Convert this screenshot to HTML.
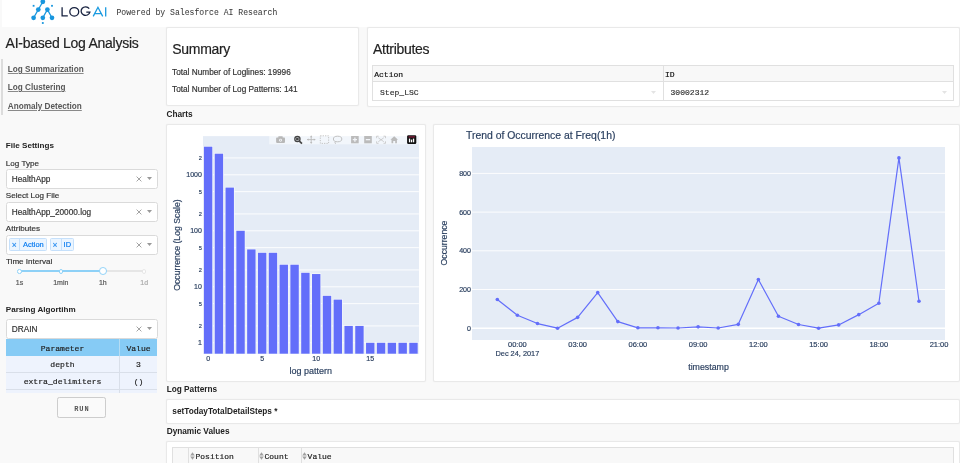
<!DOCTYPE html>
<html><head><meta charset="utf-8"><style>
html,body{margin:0;padding:0;width:960px;height:463px;overflow:hidden;background:#f9f9f9}
body{position:relative;font-family:'Liberation Sans', sans-serif}
.t{position:absolute;white-space:pre}
.r{-webkit-text-stroke:0.18px currentColor}
</style></head><body><div id="root" style="position:absolute;left:0;top:0;width:960px;height:463px;will-change:transform">
<div style="position:absolute;left:1.6px;top:0px;width:958.4px;height:26.8px;background:#fff"></div>
<svg style="position:absolute;left:0;top:0" width="120" height="27" viewBox="0 0 120 27">
<g stroke="#1796de" stroke-width="1.25" fill="none">
<line x1="42.8" y1="1.8" x2="38.3" y2="9.6"/><line x1="38.3" y1="9.6" x2="33.6" y2="17.8"/>
<line x1="47.4" y1="9.6" x2="42.8" y2="17.8"/><line x1="47.4" y1="9.6" x2="52" y2="17.8"/>
</g>
<g fill="#1796de">
<circle cx="42.8" cy="1.8" r="2.4"/><circle cx="38.3" cy="9.6" r="2.35"/><circle cx="47.4" cy="9.6" r="2.35"/>
<circle cx="33.6" cy="17.8" r="2.35"/><circle cx="42.8" cy="17.8" r="2.35"/><circle cx="52" cy="17.8" r="2.35"/>
<rect x="32.7" y="4.9" width="1.8" height="1.8"/><rect x="51.1" y="4.9" width="1.8" height="1.8"/><rect x="41.9" y="22.1" width="1.8" height="1.8"/>
</g></svg>
<svg style="position:absolute;left:0;top:0" width="120" height="27" viewBox="0 0 120 27">
<g fill="none" stroke="#16213f" stroke-width="1.3">
<path d="M62.1 7.2V15.8H67.8"/>
<ellipse cx="74.25" cy="11.85" rx="4.45" ry="4.3"/>
<path d="M89.2 8.6A4.45 4.3 0 1 0 89.9 12.1H86.3"/>
</g>
<g fill="none" stroke="#1a9ae0" stroke-width="1.3">
<path d="M93.2 16.4L97.95 7.3L102.7 16.4M94.7 13.6H101.2"/>
<path d="M105.7 7.2V16.4"/>
</g></svg>
<div class="t r" style="left:116.40px;top:9px;font:400 8.14px/8.14px 'Liberation Mono', monospace;color:#3a3a3a;-webkit-text-stroke:0.05px currentColor">Powered by Salesforce AI Research</div>
<div class="t r" style="left:5.60px;top:36px;font:400 14.0px/14.0px 'Liberation Sans', sans-serif;color:#222;letter-spacing:-0.27px;">AI-based Log Analysis</div>
<div style="position:absolute;left:1.3px;top:59px;width:1.6px;height:55.7px;background:#dcdcdc"></div>
<div class="t" style="left:7.80px;top:66px;font:700 8.19px/8.19px 'Liberation Sans', sans-serif;color:#585858;text-decoration:underline;text-decoration-color:#8a8a8a;text-decoration-thickness:0.8px;text-underline-offset:1px">Log Summarization</div>
<div class="t" style="left:7.80px;top:84px;font:700 8.19px/8.19px 'Liberation Sans', sans-serif;color:#585858;text-decoration:underline;text-decoration-color:#8a8a8a;text-decoration-thickness:0.8px;text-underline-offset:1px">Log Clustering</div>
<div class="t" style="left:7.80px;top:103px;font:700 8.19px/8.19px 'Liberation Sans', sans-serif;color:#585858;text-decoration:underline;text-decoration-color:#8a8a8a;text-decoration-thickness:0.8px;text-underline-offset:1px">Anomaly Detection</div>
<div class="t" style="left:5.80px;top:142px;font:700 8.1px/8.1px 'Liberation Sans', sans-serif;color:#222;">File Settings</div>
<div class="t r" style="left:5.80px;top:160px;font:400 8.1px/8.1px 'Liberation Sans', sans-serif;color:#333;">Log Type</div>
<div style="position:absolute;left:5.5px;top:168.8px;width:152.2px;height:20.19999999999999px;box-sizing:border-box;background:#fff;border:1px solid #dadada;border-radius:2.5px"></div>
<div class="t r" style="left:11.80px;top:176px;font:400 8.25px/8.25px 'Liberation Sans', sans-serif;color:#333;">HealthApp</div>
<svg style="position:absolute;left:136px;top:175.90px" width="6" height="6" viewBox="0 0 6 6"><path d="M0.6 0.6L5.4 5.4M5.4 0.6L0.6 5.4" stroke="#999" stroke-width="0.9"/></svg>
<svg style="position:absolute;left:146.5px;top:177.30px" width="5" height="3" viewBox="0 0 5 3"><path d="M0 0H5L2.5 3Z" fill="#999"/></svg>
<div class="t r" style="left:5.80px;top:192px;font:400 8.1px/8.1px 'Liberation Sans', sans-serif;color:#333;">Select Log File</div>
<div style="position:absolute;left:5.5px;top:202.0px;width:152.2px;height:20.0px;box-sizing:border-box;background:#fff;border:1px solid #dadada;border-radius:2.5px"></div>
<div class="t r" style="left:11.80px;top:209px;font:400 8.25px/8.25px 'Liberation Sans', sans-serif;color:#333;">HealthApp_20000.log</div>
<svg style="position:absolute;left:136px;top:209.00px" width="6" height="6" viewBox="0 0 6 6"><path d="M0.6 0.6L5.4 5.4M5.4 0.6L0.6 5.4" stroke="#999" stroke-width="0.9"/></svg>
<svg style="position:absolute;left:146.5px;top:210.40px" width="5" height="3" viewBox="0 0 5 3"><path d="M0 0H5L2.5 3Z" fill="#999"/></svg>
<div class="t r" style="left:5.80px;top:225px;font:400 8.1px/8.1px 'Liberation Sans', sans-serif;color:#333;">Attributes</div>
<div style="position:absolute;left:5.5px;top:234.6px;width:152.2px;height:20.30000000000001px;box-sizing:border-box;background:#fff;border:1px solid #dadada;border-radius:2.5px"></div>
<svg style="position:absolute;left:136px;top:241.75px" width="6" height="6" viewBox="0 0 6 6"><path d="M0.6 0.6L5.4 5.4M5.4 0.6L0.6 5.4" stroke="#999" stroke-width="0.9"/></svg>
<svg style="position:absolute;left:146.5px;top:243.15px" width="5" height="3" viewBox="0 0 5 3"><path d="M0 0H5L2.5 3Z" fill="#999"/></svg>
<div style="position:absolute;left:9.4px;top:238.1px;width:37.5px;height:13.3px;box-sizing:border-box;background:#ebf5ff;border:0.8px solid #c5e0fb;border-radius:1.5px"></div>
<div style="position:absolute;left:19.4px;top:238.1px;width:0.8px;height:13.3px;background:#c5e0fb"></div>
<div class="t r" style="left:14.20px;transform:translateX(-50%);top:241px;font:400 8.5px/8.5px 'Liberation Sans', sans-serif;color:#2a8ef0;">×</div>
<div class="t r" style="left:23.00px;top:241px;font:400 7.45px/7.45px 'Liberation Sans', sans-serif;color:#0a7cf0;">Action</div>
<div style="position:absolute;left:49.7px;top:238.1px;width:23.9px;height:13.3px;box-sizing:border-box;background:#ebf5ff;border:0.8px solid #c5e0fb;border-radius:1.5px"></div>
<div style="position:absolute;left:60.7px;top:238.1px;width:0.8px;height:13.3px;background:#c5e0fb"></div>
<div class="t r" style="left:55.00px;transform:translateX(-50%);top:241px;font:400 8.5px/8.5px 'Liberation Sans', sans-serif;color:#2a8ef0;">×</div>
<div class="t r" style="left:63.60px;top:241px;font:400 7.45px/7.45px 'Liberation Sans', sans-serif;color:#0a7cf0;">ID</div>
<div class="t r" style="left:6.00px;top:258px;font:400 8.05px/8.05px 'Liberation Sans', sans-serif;color:#333;">Time Interval</div>
<div style="position:absolute;left:19.5px;top:270.3px;width:83.3px;height:2.0px;background:#8ed1f7"></div>
<div style="position:absolute;left:102.8px;top:270.3px;width:41.4px;height:2.0px;background:#e6e6e6"></div>
<div style="position:absolute;left:17.2px;top:269.0px;width:4.6px;height:4.6px;box-sizing:border-box;background:#fff;border:1.1px solid #8ed1f7;border-radius:50%"></div>
<div style="position:absolute;left:58.5px;top:269.0px;width:4.6px;height:4.6px;box-sizing:border-box;background:#fff;border:1.1px solid #8ed1f7;border-radius:50%"></div>
<div style="position:absolute;left:141.89999999999998px;top:269.0px;width:4.6px;height:4.6px;box-sizing:border-box;background:#fff;border:1.1px solid #e6e6e6;border-radius:50%"></div>
<div style="position:absolute;left:98.89999999999999px;top:267.40000000000003px;width:7.8px;height:7.8px;box-sizing:border-box;background:#fff;border:1.6px solid #8ed1f7;border-radius:50%"></div>
<div class="t r" style="left:19.50px;transform:translateX(-50%);top:279px;font:400 7.0px/7.0px 'Liberation Sans', sans-serif;color:#555;">1s</div>
<div class="t r" style="left:60.80px;transform:translateX(-50%);top:279px;font:400 7.0px/7.0px 'Liberation Sans', sans-serif;color:#555;">1min</div>
<div class="t r" style="left:102.80px;transform:translateX(-50%);top:279px;font:400 7.0px/7.0px 'Liberation Sans', sans-serif;color:#555;">1h</div>
<div class="t r" style="left:144.20px;transform:translateX(-50%);top:279px;font:400 7.0px/7.0px 'Liberation Sans', sans-serif;color:#aaa;">1d</div>
<div class="t" style="left:5.80px;top:306px;font:700 8.1px/8.1px 'Liberation Sans', sans-serif;color:#222;">Parsing Algortihm</div>
<div style="position:absolute;left:5.5px;top:319.1px;width:152.2px;height:19.5px;box-sizing:border-box;background:#fff;border:1px solid #dadada;border-radius:2.5px"></div>
<div class="t r" style="left:11.80px;top:326px;font:400 8.25px/8.25px 'Liberation Sans', sans-serif;color:#333;">DRAIN</div>
<svg style="position:absolute;left:136px;top:325.85px" width="6" height="6" viewBox="0 0 6 6"><path d="M0.6 0.6L5.4 5.4M5.4 0.6L0.6 5.4" stroke="#999" stroke-width="0.9"/></svg>
<svg style="position:absolute;left:146.5px;top:327.25px" width="5" height="3" viewBox="0 0 5 3"><path d="M0 0H5L2.5 3Z" fill="#999"/></svg>
<div style="position:absolute;left:6px;top:338.6px;width:151.3px;height:17.3px;background:#86cbf5"></div>
<div style="position:absolute;left:119.3px;top:338.6px;width:0.8px;height:17.3px;background:#b5dcf3"></div>
<div class="t r" style="left:62.50px;transform:translateX(-50%);top:345px;font:400 8.05px/8.05px 'Liberation Mono', monospace;color:#222;">Parameter</div>
<div class="t r" style="left:138.50px;transform:translateX(-50%);top:345px;font:400 8.05px/8.05px 'Liberation Mono', monospace;color:#222;">Value</div>
<div style="position:absolute;left:6px;top:355.9px;width:151.3px;height:37.6px;background:#eef3fd"></div>
<div style="position:absolute;left:6px;top:371.8px;width:151.3px;height:0.9px;background:#d9dfe9"></div>
<div style="position:absolute;left:6px;top:388.5px;width:151.3px;height:0.9px;background:#d9dfe9"></div>
<div style="position:absolute;left:119.3px;top:355.9px;width:0.9px;height:37.6px;background:#d9dfe9"></div>
<div class="t r" style="left:62.50px;transform:translateX(-50%);top:361px;font:400 8.1px/8.1px 'Liberation Mono', monospace;color:#222;">depth</div>
<div class="t r" style="left:138.50px;transform:translateX(-50%);top:361px;font:400 8.1px/8.1px 'Liberation Mono', monospace;color:#222;">3</div>
<div class="t r" style="left:62.50px;transform:translateX(-50%);top:378px;font:400 8.1px/8.1px 'Liberation Mono', monospace;color:#222;">extra_delimiters</div>
<div class="t r" style="left:138.50px;transform:translateX(-50%);top:378px;font:400 8.1px/8.1px 'Liberation Mono', monospace;color:#222;">()</div>
<div style="position:absolute;left:57.0px;top:396.8px;width:49.4px;height:21.5px;box-sizing:border-box;background:#fafafa;border:1px solid #cdcdcd;border-radius:2.5px;box-shadow:0 0 0.6px rgba(0,0,0,0.12)"></div>
<div class="t" style="left:81.90px;transform:translateX(-50%);top:406px;font:700 7.0px/7.0px 'Liberation Mono', monospace;color:#555;letter-spacing:0.9px;">RUN</div>
<div style="position:absolute;left:166.1px;top:27.0px;width:192.7px;height:79.0px;box-sizing:border-box;background:#fff;border:1px solid #e9e9e9;border-radius:2px;box-shadow:0 0 1px rgba(0,0,0,0.10)"></div>
<div class="t r" style="left:172.30px;top:42px;font:400 14.0px/14.0px 'Liberation Sans', sans-serif;color:#222;letter-spacing:-0.31px;">Summary</div>
<div class="t r" style="left:172.00px;top:69px;font:400 8.25px/8.25px 'Liberation Sans', sans-serif;color:#333;">Total Number of Loglines: 19996</div>
<div class="t r" style="left:172.00px;top:86px;font:400 8.25px/8.25px 'Liberation Sans', sans-serif;color:#333;">Total Number of Log Patterns: 141</div>
<div style="position:absolute;left:366.7px;top:27.4px;width:593.5px;height:79.9px;box-sizing:border-box;background:#fff;border:1px solid #e9e9e9;border-radius:2px;box-shadow:0 0 1px rgba(0,0,0,0.10)"></div>
<div class="t r" style="left:373.00px;top:42px;font:400 14.0px/14.0px 'Liberation Sans', sans-serif;color:#222;letter-spacing:-0.28px;">Attributes</div>
<div style="position:absolute;left:372.2px;top:65.4px;width:581.6px;height:35.2px;box-sizing:border-box;border:1px solid #e0e0e0;background:#fff"></div>
<div style="position:absolute;left:373.2px;top:66.4px;width:579.6px;height:15.0px;background:#f8f8f8"></div>
<div style="position:absolute;left:372.2px;top:81.2px;width:581.6px;height:0.9px;background:#e0e0e0"></div>
<div style="position:absolute;left:663.0px;top:65.4px;width:0.9px;height:35.2px;background:#e0e0e0"></div>
<div class="t r" style="left:374.20px;top:71px;font:400 8.05px/8.05px 'Liberation Mono', monospace;color:#111;">Action</div>
<div class="t r" style="left:665.00px;top:71px;font:400 8.05px/8.05px 'Liberation Mono', monospace;color:#111;">ID</div>
<div class="t r" style="left:380.00px;top:89px;font:400 8.05px/8.05px 'Liberation Mono', monospace;color:#333;">Step_LSC</div>
<div class="t r" style="left:670.50px;top:89px;font:400 8.05px/8.05px 'Liberation Mono', monospace;color:#333;">30002312</div>
<svg style="position:absolute;left:651.20px;top:90.8px" width="5" height="3" viewBox="0 0 5 3"><path d="M0 0H5L2.5 3Z" fill="#e4e4e4"/></svg>
<svg style="position:absolute;left:941.50px;top:90.8px" width="5" height="3" viewBox="0 0 5 3"><path d="M0 0H5L2.5 3Z" fill="#e4e4e4"/></svg>
<div class="t" style="left:166.50px;top:111px;font:700 8.25px/8.25px 'Liberation Sans', sans-serif;color:#222;">Charts</div>
<div style="position:absolute;left:166.3px;top:123.8px;width:259.6px;height:258.2px;box-sizing:border-box;background:#fff;border:1px solid #e9e9e9;border-radius:2px;box-shadow:0 0 1px rgba(0,0,0,0.10)"></div>
<div style="position:absolute;left:433.2px;top:123.8px;width:527.0px;height:258.2px;box-sizing:border-box;background:#fff;border:1px solid #e9e9e9;border-radius:2px;box-shadow:0 0 1px rgba(0,0,0,0.10)"></div>
<div class="t" style="left:166.70px;top:386px;font:700 8.25px/8.25px 'Liberation Sans', sans-serif;color:#222;">Log Patterns</div>
<div style="position:absolute;left:166.3px;top:399.2px;width:793.9px;height:24.7px;box-sizing:border-box;background:#fff;border:1px solid #e9e9e9;border-radius:2px;box-shadow:0 0 1px rgba(0,0,0,0.10)"></div>
<div class="t" style="left:172.30px;top:408px;font:700 8.25px/8.25px 'Liberation Sans', sans-serif;color:#222;">setTodayTotalDetailSteps *</div>
<div class="t" style="left:166.70px;top:428px;font:700 8.25px/8.25px 'Liberation Sans', sans-serif;color:#222;">Dynamic Values</div>
<div style="position:absolute;left:166.3px;top:441.3px;width:793.9px;height:28.7px;box-sizing:border-box;background:#fff;border:1px solid #e9e9e9;border-radius:2px;box-shadow:0 0 1px rgba(0,0,0,0.10)"></div>
<div style="position:absolute;left:172.3px;top:447.2px;width:781.7px;height:30px;box-sizing:border-box;border:1px solid #e0e0e0;background:#f8f8f8"></div>
<div style="position:absolute;left:188.4px;top:447.2px;width:0.9px;height:30px;background:#e0e0e0"></div>
<div style="position:absolute;left:257.6px;top:447.2px;width:0.9px;height:30px;background:#e0e0e0"></div>
<div style="position:absolute;left:300.7px;top:447.2px;width:0.9px;height:30px;background:#e0e0e0"></div>
<svg style="position:absolute;left:190.00px;top:451.6px" width="5" height="8" viewBox="0 0 5 8"><path d="M0.2 3.4L2.5 0.3L4.8 3.4ZM0.2 4.6L2.5 7.7L4.8 4.6Z" fill="#a0a0a0"/></svg>
<div class="t r" style="left:195.50px;top:453px;font:400 8.0px/8.0px 'Liberation Mono', monospace;color:#222;">Position</div>
<svg style="position:absolute;left:259.00px;top:451.6px" width="5" height="8" viewBox="0 0 5 8"><path d="M0.2 3.4L2.5 0.3L4.8 3.4ZM0.2 4.6L2.5 7.7L4.8 4.6Z" fill="#a0a0a0"/></svg>
<div class="t r" style="left:264.50px;top:453px;font:400 8.0px/8.0px 'Liberation Mono', monospace;color:#222;">Count</div>
<svg style="position:absolute;left:302.10px;top:451.6px" width="5" height="8" viewBox="0 0 5 8"><path d="M0.2 3.4L2.5 0.3L4.8 3.4ZM0.2 4.6L2.5 7.7L4.8 4.6Z" fill="#a0a0a0"/></svg>
<div class="t r" style="left:307.60px;top:453px;font:400 8.0px/8.0px 'Liberation Mono', monospace;color:#222;">Value</div>
<div style="position:absolute;left:202.7px;top:135.5px;width:216.2px;height:218.2px;background:#e5ecf6"></div>
<svg style="position:absolute;left:0;top:0" width="960" height="463" viewBox="0 0 960 463"><line x1="202.7" y1="342.80" x2="418.9" y2="342.80" stroke="#fff" stroke-width="0.9"/><line x1="202.7" y1="325.94" x2="418.9" y2="325.94" stroke="#fff" stroke-width="0.9"/><line x1="202.7" y1="303.66" x2="418.9" y2="303.66" stroke="#fff" stroke-width="0.9"/><line x1="202.7" y1="286.80" x2="418.9" y2="286.80" stroke="#fff" stroke-width="0.9"/><line x1="202.7" y1="269.94" x2="418.9" y2="269.94" stroke="#fff" stroke-width="0.9"/><line x1="202.7" y1="247.66" x2="418.9" y2="247.66" stroke="#fff" stroke-width="0.9"/><line x1="202.7" y1="230.80" x2="418.9" y2="230.80" stroke="#fff" stroke-width="0.9"/><line x1="202.7" y1="213.94" x2="418.9" y2="213.94" stroke="#fff" stroke-width="0.9"/><line x1="202.7" y1="191.66" x2="418.9" y2="191.66" stroke="#fff" stroke-width="0.9"/><line x1="202.7" y1="174.80" x2="418.9" y2="174.80" stroke="#fff" stroke-width="0.9"/><line x1="202.7" y1="157.94" x2="418.9" y2="157.94" stroke="#fff" stroke-width="0.9"/><line x1="202.7" y1="135.66" x2="418.9" y2="135.66" stroke="#fff" stroke-width="0.9"/><rect x="203.21" y="145.99" width="9.80" height="207.71" fill="#f4f7fc"/><rect x="203.91" y="146.69" width="8.4" height="207.01" fill="#636efa"/><rect x="214.02" y="153.00" width="9.80" height="200.70" fill="#f4f7fc"/><rect x="214.72" y="153.70" width="8.4" height="200.00" fill="#636efa"/><rect x="224.83" y="186.89" width="9.80" height="166.81" fill="#f4f7fc"/><rect x="225.53" y="187.59" width="8.4" height="166.11" fill="#636efa"/><rect x="235.64" y="230.10" width="9.80" height="123.60" fill="#f4f7fc"/><rect x="236.34" y="230.80" width="8.4" height="122.90" fill="#636efa"/><rect x="246.45" y="248.72" width="9.80" height="104.98" fill="#f4f7fc"/><rect x="247.15" y="249.42" width="8.4" height="104.28" fill="#636efa"/><rect x="257.25" y="252.08" width="9.80" height="101.62" fill="#f4f7fc"/><rect x="257.95" y="252.78" width="8.4" height="100.92" fill="#636efa"/><rect x="268.06" y="252.08" width="9.80" height="101.62" fill="#f4f7fc"/><rect x="268.76" y="252.78" width="8.4" height="100.92" fill="#636efa"/><rect x="278.88" y="264.01" width="9.80" height="89.69" fill="#f4f7fc"/><rect x="279.57" y="264.71" width="8.4" height="88.99" fill="#636efa"/><rect x="289.68" y="264.01" width="9.80" height="89.69" fill="#f4f7fc"/><rect x="290.38" y="264.71" width="8.4" height="88.99" fill="#636efa"/><rect x="300.50" y="272.08" width="9.80" height="81.62" fill="#f4f7fc"/><rect x="301.19" y="272.78" width="8.4" height="80.92" fill="#636efa"/><rect x="311.30" y="273.34" width="9.80" height="80.36" fill="#f4f7fc"/><rect x="312.00" y="274.04" width="8.4" height="79.66" fill="#636efa"/><rect x="322.11" y="295.12" width="9.80" height="58.58" fill="#f4f7fc"/><rect x="322.81" y="295.82" width="8.4" height="57.88" fill="#636efa"/><rect x="332.92" y="298.93" width="9.80" height="54.77" fill="#f4f7fc"/><rect x="333.62" y="299.63" width="8.4" height="54.07" fill="#636efa"/><rect x="343.73" y="325.24" width="9.80" height="28.46" fill="#f4f7fc"/><rect x="344.43" y="325.94" width="8.4" height="27.76" fill="#636efa"/><rect x="354.54" y="325.24" width="9.80" height="28.46" fill="#f4f7fc"/><rect x="355.24" y="325.94" width="8.4" height="27.76" fill="#636efa"/><rect x="365.35" y="342.10" width="9.80" height="11.60" fill="#f4f7fc"/><rect x="366.05" y="342.80" width="8.4" height="10.90" fill="#636efa"/><rect x="376.16" y="342.10" width="9.80" height="11.60" fill="#f4f7fc"/><rect x="376.86" y="342.80" width="8.4" height="10.90" fill="#636efa"/><rect x="386.97" y="342.10" width="9.80" height="11.60" fill="#f4f7fc"/><rect x="387.67" y="342.80" width="8.4" height="10.90" fill="#636efa"/><rect x="397.78" y="342.10" width="9.80" height="11.60" fill="#f4f7fc"/><rect x="398.48" y="342.80" width="8.4" height="10.90" fill="#636efa"/><rect x="408.59" y="342.10" width="9.80" height="11.60" fill="#f4f7fc"/><rect x="409.29" y="342.80" width="8.4" height="10.90" fill="#636efa"/></svg>
<svg style="position:absolute;left:0;top:0" width="960" height="463" viewBox="0 0 960 463">
<rect x="269.2" y="135.3" width="149.7" height="9" fill="#fff" fill-opacity="0.5"/>
<g fill="#b8b8b8">
<rect x="276.1" y="137.6" width="8.9" height="5.3" rx="0.8"/><rect x="278.3" y="136.3" width="4.4" height="1.8" rx="0.4"/>
</g><circle cx="280.55" cy="140.2" r="1.45" fill="#f2f4f8"/><circle cx="280.55" cy="140.2" r="0.6" fill="#b8b8b8"/>
<g stroke="#444" fill="none"><circle cx="297.4" cy="139.1" r="2.6" stroke-width="1.3"/><path d="M299.3 141.1L302 143.7" stroke-width="1.7"/></g>
<rect x="296.1" y="137.8" width="2.6" height="2.6" fill="#444"/>
<g stroke="#bbb" stroke-width="0.9" fill="none"><path d="M307.2 139.6H315.2M311.2 135.8V143.4"/></g>
<g fill="#bbb"><path d="M306.8 139.6L308.6 138.4V140.8Z M315.6 139.6L313.8 138.4V140.8Z M311.2 135.4L310 137.2H312.4Z M311.2 143.8L310 142H312.4Z"/></g>
<rect x="320.3" y="135.8" width="8.3" height="7.6" fill="none" stroke="#bbb" stroke-width="0.9" stroke-dasharray="1.2 1.2"/>
<g fill="none" stroke="#bbb" stroke-width="0.9"><ellipse cx="337.6" cy="139.0" rx="4.2" ry="2.8"/><path d="M335.3 141.5Q334.5 143 335.6 143.8"/></g>
<rect x="351.1" y="136.0" width="7.6" height="7.3" fill="#bbb"/><path d="M354.9 137.6V141.7M352.8 139.65H357" stroke="#f2f4f8" stroke-width="1.3"/>
<rect x="364.2" y="136.0" width="7.6" height="7.3" fill="#bbb"/><path d="M365.8 139.65H370.2" stroke="#f2f4f8" stroke-width="1.3"/>
<g fill="none" stroke="#c4c4c4" stroke-width="0.8"><path d="M376.6 138.2V136.2H378.6M383.5 136.2H385.5V138.2M385.5 141.3V143.3H383.5M378.6 143.3H376.6V141.3M378.3 137.8L383.8 141.7M383.8 137.8L378.3 141.7"/></g>
<path d="M394.2 136.2L390.4 139.8H391.5V143.2H393.2V141H395.2V143.2H396.9V139.8H398Z" fill="#bbb"/>
<rect x="407.1" y="135.2" width="9.2" height="8.8" rx="1.3" fill="#111"/>
<g><rect x="408.9" y="138.6" width="1.3" height="3.7" fill="#fff"/><rect x="410.9" y="139.6" width="1.3" height="2.7" fill="#fff"/><rect x="412.9" y="138.6" width="1.3" height="3.7" fill="#fff"/><rect x="408.5" y="136.6" width="6.4" height="0.7" fill="#e0245e"/></g>
</svg>
<div class="t r" style="right:758.20px;top:339px;font:400 7.0px/7.0px 'Liberation Sans', sans-serif;color:#2a3f5f;">1</div>
<div class="t r" style="right:758.20px;top:324px;font:400 5.6px/5.6px 'Liberation Sans', sans-serif;color:#2a3f5f;">2</div>
<div class="t r" style="right:758.20px;top:302px;font:400 5.6px/5.6px 'Liberation Sans', sans-serif;color:#2a3f5f;">5</div>
<div class="t r" style="right:758.20px;top:283px;font:400 7.0px/7.0px 'Liberation Sans', sans-serif;color:#2a3f5f;">10</div>
<div class="t r" style="right:758.20px;top:268px;font:400 5.6px/5.6px 'Liberation Sans', sans-serif;color:#2a3f5f;">2</div>
<div class="t r" style="right:758.20px;top:246px;font:400 5.6px/5.6px 'Liberation Sans', sans-serif;color:#2a3f5f;">5</div>
<div class="t r" style="right:758.20px;top:227px;font:400 7.0px/7.0px 'Liberation Sans', sans-serif;color:#2a3f5f;">100</div>
<div class="t r" style="right:758.20px;top:212px;font:400 5.6px/5.6px 'Liberation Sans', sans-serif;color:#2a3f5f;">2</div>
<div class="t r" style="right:758.20px;top:190px;font:400 5.6px/5.6px 'Liberation Sans', sans-serif;color:#2a3f5f;">5</div>
<div class="t r" style="right:758.20px;top:171px;font:400 7.0px/7.0px 'Liberation Sans', sans-serif;color:#2a3f5f;">1000</div>
<div class="t r" style="right:758.20px;top:156px;font:400 5.6px/5.6px 'Liberation Sans', sans-serif;color:#2a3f5f;">2</div>
<div class="t r" style="left:208.10px;transform:translateX(-50%);top:355px;font:400 7.0px/7.0px 'Liberation Sans', sans-serif;color:#2a3f5f;">0</div>
<div class="t r" style="left:262.15px;transform:translateX(-50%);top:355px;font:400 7.0px/7.0px 'Liberation Sans', sans-serif;color:#2a3f5f;">5</div>
<div class="t r" style="left:316.20px;transform:translateX(-50%);top:355px;font:400 7.0px/7.0px 'Liberation Sans', sans-serif;color:#2a3f5f;">10</div>
<div class="t r" style="left:370.25px;transform:translateX(-50%);top:355px;font:400 7.0px/7.0px 'Liberation Sans', sans-serif;color:#2a3f5f;">15</div>
<div class="t r" style="left:310.80px;transform:translateX(-50%);top:367px;font:400 8.97px/8.97px 'Liberation Sans', sans-serif;color:#2a3f5f;">log pattern</div>
<div class="t r" style="left:177.2px;top:244.6px;transform:translate(-50%,-50%) rotate(-90deg);font:400 8.67px/8.67px 'Liberation Sans', sans-serif;color:#2a3f5f">Occurrence (Log Scale)</div>
<div style="position:absolute;left:472.0px;top:146.5px;width:473.0px;height:193.4px;background:#e5ecf6"></div>
<svg style="position:absolute;left:0;top:0" width="960" height="463" viewBox="0 0 960 463"><line x1="472.0" y1="328.20" x2="945.0" y2="328.20" stroke="#fff" stroke-width="1.6"/><line x1="472.0" y1="289.50" x2="945.0" y2="289.50" stroke="#fff" stroke-width="0.9"/><line x1="472.0" y1="250.80" x2="945.0" y2="250.80" stroke="#fff" stroke-width="0.9"/><line x1="472.0" y1="212.10" x2="945.0" y2="212.10" stroke="#fff" stroke-width="0.9"/><line x1="472.0" y1="173.40" x2="945.0" y2="173.40" stroke="#fff" stroke-width="0.9"/><polyline points="497.32,299.56 517.40,315.24 537.48,323.56 557.56,328.20 577.64,317.36 597.72,292.60 617.80,321.62 637.88,327.81 657.96,327.81 678.04,328.01 698.12,326.85 718.20,328.01 738.28,324.33 758.36,279.44 778.44,316.20 798.52,324.52 818.60,328.20 838.68,324.91 858.76,314.65 878.84,303.24 898.92,157.92 919.00,301.21" fill="none" stroke="#636efa" stroke-width="1.2" stroke-linejoin="round"/><circle cx="497.32" cy="299.56" r="1.8" fill="#636efa"/><circle cx="517.40" cy="315.24" r="1.8" fill="#636efa"/><circle cx="537.48" cy="323.56" r="1.8" fill="#636efa"/><circle cx="557.56" cy="328.20" r="1.8" fill="#636efa"/><circle cx="577.64" cy="317.36" r="1.8" fill="#636efa"/><circle cx="597.72" cy="292.60" r="1.8" fill="#636efa"/><circle cx="617.80" cy="321.62" r="1.8" fill="#636efa"/><circle cx="637.88" cy="327.81" r="1.8" fill="#636efa"/><circle cx="657.96" cy="327.81" r="1.8" fill="#636efa"/><circle cx="678.04" cy="328.01" r="1.8" fill="#636efa"/><circle cx="698.12" cy="326.85" r="1.8" fill="#636efa"/><circle cx="718.20" cy="328.01" r="1.8" fill="#636efa"/><circle cx="738.28" cy="324.33" r="1.8" fill="#636efa"/><circle cx="758.36" cy="279.44" r="1.8" fill="#636efa"/><circle cx="778.44" cy="316.20" r="1.8" fill="#636efa"/><circle cx="798.52" cy="324.52" r="1.8" fill="#636efa"/><circle cx="818.60" cy="328.20" r="1.8" fill="#636efa"/><circle cx="838.68" cy="324.91" r="1.8" fill="#636efa"/><circle cx="858.76" cy="314.65" r="1.8" fill="#636efa"/><circle cx="878.84" cy="303.24" r="1.8" fill="#636efa"/><circle cx="898.92" cy="157.92" r="1.8" fill="#636efa"/><circle cx="919.00" cy="301.21" r="1.8" fill="#636efa"/></svg>
<div class="t r" style="right:489.00px;top:326px;font:400 7.1px/7.1px 'Liberation Sans', sans-serif;color:#2a3f5f;">0</div>
<div class="t r" style="right:489.00px;top:287px;font:400 7.1px/7.1px 'Liberation Sans', sans-serif;color:#2a3f5f;">200</div>
<div class="t r" style="right:489.00px;top:248px;font:400 7.1px/7.1px 'Liberation Sans', sans-serif;color:#2a3f5f;">400</div>
<div class="t r" style="right:489.00px;top:210px;font:400 7.1px/7.1px 'Liberation Sans', sans-serif;color:#2a3f5f;">600</div>
<div class="t r" style="right:489.00px;top:171px;font:400 7.1px/7.1px 'Liberation Sans', sans-serif;color:#2a3f5f;">800</div>
<div class="t r" style="left:517.40px;transform:translateX(-50%);top:341px;font:400 7.5px/7.5px 'Liberation Sans', sans-serif;color:#2a3f5f;">00:00</div>
<div class="t r" style="left:577.64px;transform:translateX(-50%);top:341px;font:400 7.5px/7.5px 'Liberation Sans', sans-serif;color:#2a3f5f;">03:00</div>
<div class="t r" style="left:637.88px;transform:translateX(-50%);top:341px;font:400 7.5px/7.5px 'Liberation Sans', sans-serif;color:#2a3f5f;">06:00</div>
<div class="t r" style="left:698.12px;transform:translateX(-50%);top:341px;font:400 7.5px/7.5px 'Liberation Sans', sans-serif;color:#2a3f5f;">09:00</div>
<div class="t r" style="left:758.36px;transform:translateX(-50%);top:341px;font:400 7.5px/7.5px 'Liberation Sans', sans-serif;color:#2a3f5f;">12:00</div>
<div class="t r" style="left:818.60px;transform:translateX(-50%);top:341px;font:400 7.5px/7.5px 'Liberation Sans', sans-serif;color:#2a3f5f;">15:00</div>
<div class="t r" style="left:878.84px;transform:translateX(-50%);top:341px;font:400 7.5px/7.5px 'Liberation Sans', sans-serif;color:#2a3f5f;">18:00</div>
<div class="t r" style="left:939.08px;transform:translateX(-50%);top:341px;font:400 7.5px/7.5px 'Liberation Sans', sans-serif;color:#2a3f5f;">21:00</div>
<div class="t r" style="left:517.40px;transform:translateX(-50%);top:350px;font:400 7.38px/7.38px 'Liberation Sans', sans-serif;color:#2a3f5f;">Dec 24, 2017</div>
<div class="t r" style="left:708.50px;transform:translateX(-50%);top:363px;font:400 8.8px/8.8px 'Liberation Sans', sans-serif;color:#2a3f5f;">timestamp</div>
<div class="t r" style="left:443.9px;top:243px;transform:translate(-50%,-50%) rotate(-90deg);font:400 8.67px/8.67px 'Liberation Sans', sans-serif;color:#2a3f5f">Occurrence</div>
<div class="t r" style="left:466.00px;top:131px;font:400 10.42px/10.42px 'Liberation Sans', sans-serif;color:#2a3f5f;">Trend of Occurrence at Freq(1h)</div>
</div></body></html>
